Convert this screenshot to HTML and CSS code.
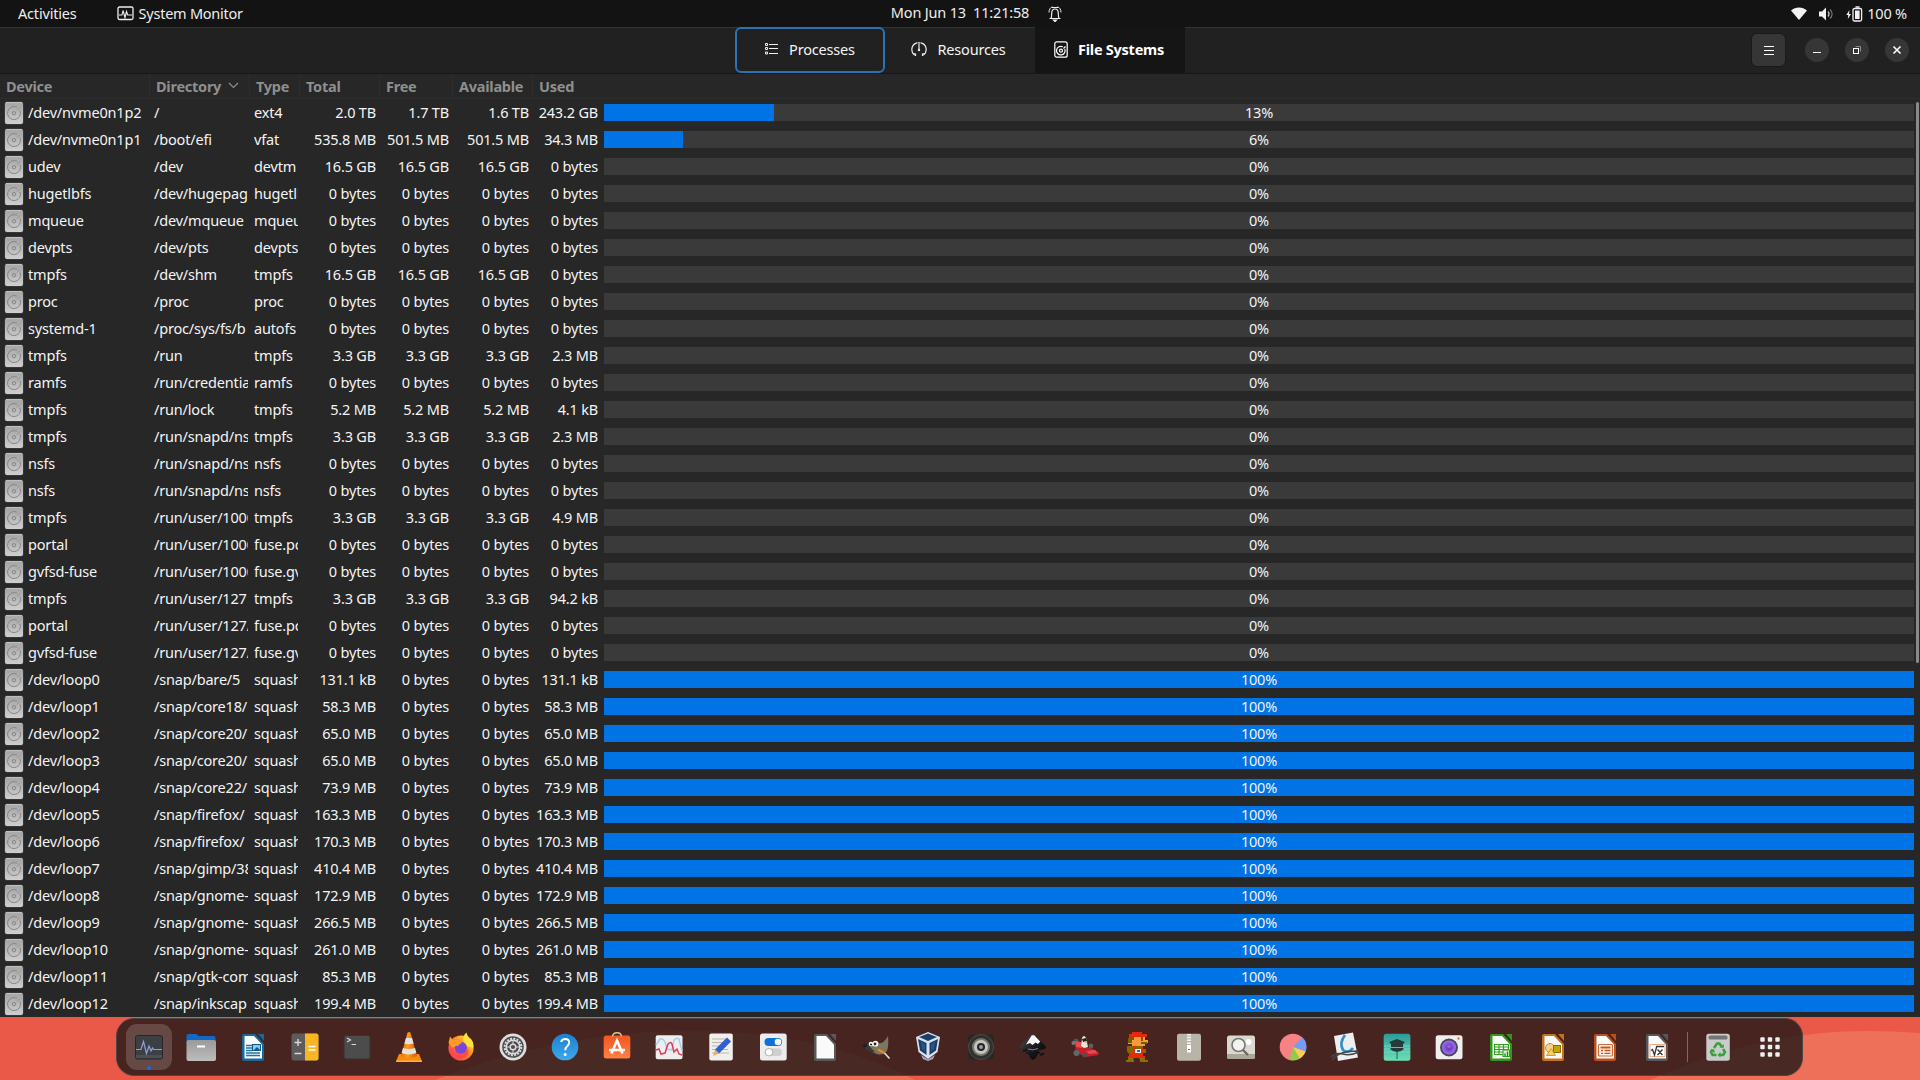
FILE: index.html
```html
<!DOCTYPE html>
<html lang="en">
<head>
<meta charset="utf-8">
<title>System Monitor</title>
<link rel="stylesheet" href="styles.css">
</head>
<body>
<svg class="defs" width="0" height="0">
  <defs>
    <linearGradient id="disk" x1="0" y1="0" x2="0" y2="1"><stop offset="0" stop-color="#a2a2a2"/><stop offset="1" stop-color="#cfcfcf"/></linearGradient>
    <linearGradient id="cone" x1="0" y1="0" x2="1" y2="0"><stop offset="0" stop-color="#e86f00"/><stop offset=".4" stop-color="#ff9a1f"/><stop offset="1" stop-color="#d85f00"/></linearGradient>
    <linearGradient id="fold" x1="0" y1="0" x2="0" y2="1"><stop offset="0" stop-color="#9a9a9a"/><stop offset="1" stop-color="#bdbdbd"/></linearGradient>
    <linearGradient id="help" x1="0" y1="0" x2="0" y2="1"><stop offset="0" stop-color="#1b7fd0"/><stop offset="1" stop-color="#3fa9ea"/></linearGradient>
    <linearGradient id="soft" x1="0" y1="0" x2="0" y2="1"><stop offset="0" stop-color="#f2571f"/><stop offset="1" stop-color="#ff7f45"/></linearGradient>
    <linearGradient id="teal" x1="0" y1="0" x2="0" y2="1"><stop offset="0" stop-color="#2b9a9a"/><stop offset="1" stop-color="#6be0b5"/></linearGradient>
    <linearGradient id="ink" x1="0" y1="0" x2="1" y2="1"><stop offset="0" stop-color="#555"/><stop offset=".5" stop-color="#1a1c20"/><stop offset="1" stop-color="#000"/></linearGradient>
    <linearGradient id="fox" x1="1" y1="0" x2="0" y2="1"><stop offset="0" stop-color="#fff03f"/><stop offset=".45" stop-color="#ff8a1f"/><stop offset="1" stop-color="#f0246a"/></linearGradient>
    <radialGradient id="lens"><stop offset="0" stop-color="#5b2fb0"/><stop offset="1" stop-color="#a070ee"/></radialGradient>
    <symbol id="drive" viewBox="0 0 20 24">
      <rect x=".5" y=".5" width="19" height="23" rx="2.500" fill="#484848"/>
      <rect x="1" y="1" width="18" height="22" rx="2" fill="url(#disk)"/>
      <path d="M2 1.700h16" stroke="#c4c4c4"/>
      <path d="M16 9.500a6.500 6.500 0 1 1-3-3.200" fill="none" stroke="#868686"/>
      <path d="M13 9.500l3-3" stroke="#8e8e8e"/>
      <circle cx="10" cy="12.200" r="1.700" fill="#b8b8b8" stroke="#868686"/>
    </symbol>
    <symbol id="doc" viewBox="0 0 32 32">
      <path d="M7 3h11l9 10v15a2 2 0 0 1-2 2H7a2 2 0 0 1-2-2V5a2 2 0 0 1 2-2z" fill="currentColor"/>
      <path d="M21 3h6v7z" fill="currentColor"/>
      <path d="M7.500 5H17l8 8.500V27.500H7.500z" fill="#fafafa"/>
    </symbol>
  </defs>
</svg>

<header class="panel">
  <div class="panel-side">
    <span class="activities">Activities</span>
    <span class="app-menu">
      <svg width="17" height="15" viewBox="0 0 17 15" fill="none" stroke="#eee" stroke-width="1.300"><rect x="1" y="1" width="15" height="12.500" rx="1.500"/><path d="M2 9h3l1-4.500 2 7 1.500-6 1.200 3.500H15" stroke-width="1.100"/></svg>
      <span class="app-name">System Monitor</span>
    </span>
  </div>
  <div class="clock"><span class="clock-text">Mon Jun 13 &nbsp;11:21:58</span>
    <svg width="14" height="16" viewBox="0 0 14 16" fill="none" stroke="#eee" stroke-width="1.200"><path d="M1.500 12.500h11M2.800 12.500c.9-1 .9-2.500.9-5C3.700 4.700 5 3 7 3s3.300 1.700 3.300 4.500c0 2.500 0 4 .9 5"/><path d="M5.500 14h3L7 15.600z" fill="#eee"/><path d="M1 6.500C1 3.500 2.500 1.300 4.500.8M13 6.500c0-3-1.500-5.200-3.500-5.700M4 1.500h6" stroke-width="1"/></svg>
  </div>
  <div class="panel-side status">
    <svg width="16" height="13" viewBox="0 0 16 13"><path d="M0 3.500C4.500-.6 11.500-.6 16 3.500L8 13z" fill="#f2f2f2"/></svg>
    <svg class="vol" width="15" height="14" viewBox="0 0 15 14"><path d="M0 4.500h3L7 .5v13L3 9.500H0z" fill="#f2f2f2"/><path d="M9 4.500c1.300 1.500 1.300 3.500 0 5" stroke="#bbb" stroke-width="1.300" fill="none"/><path d="M11 2.500c2.700 2.700 2.700 6.300 0 9" stroke="#777" stroke-width="1.300" fill="none"/></svg>
    <svg class="bat" width="17" height="16" viewBox="0 0 17 16"><path d="M3.500 4L.3 9h2l-.5 4L5 8H3z" fill="#f2f2f2"/><rect x="7" y="2.500" width="8.600" height="12.500" rx="1.500" fill="none" stroke="#f2f2f2" stroke-width="1.300"/><rect x="9" y="4.500" width="4.600" height="8.500" fill="#f2f2f2"/><path d="M9.500 1h4" stroke="#f2f2f2" stroke-width="1.500"/></svg>
    <span class="percent">100 %</span>
  </div>
</header>

<main class="window">
  <div class="headerbar">
    <div class="hb-side"></div>
    <nav class="tabs">
      <div class="tab focused">
        <svg width="13" height="12" viewBox="0 0 13 12" fill="none" stroke="#eee"><path d="M4 1.500h9M4 5.500h9M4 10.500h9" /><path d="M.5.500h2v2h-2zM.5 4.500h2v2h-2zM.5 9h2v2h-2z"/></svg>
        <span class="t-proc">Processes</span>
      </div>
      <div class="tab resources">
        <svg width="16" height="15" viewBox="0 0 16 15" fill="none" stroke="#eee" stroke-width="1.200"><path d="M3.600 13.200a7 7 0 0 1 1-11.800M12.400 13.200a7 7 0 0 0-1-11.800M6.500.8h3M4.500 1.400l1.500-.5M11.500 1.400L10 .9"/><path d="M8 2v6"/><circle cx="8" cy="8" r="1.200" fill="#eee" stroke="none"/><path d="M2 11.500l2.500.5v2M14 11.500l-2.500.5v2"/></svg>
        <span class="t-res">Resources</span>
      </div>
      <div class="tab active">
        <svg width="14" height="17" viewBox="0 0 14 17" fill="none" stroke="#fff" stroke-width="1.200"><rect x=".8" y=".8" width="12.400" height="15.400" rx="2"/><path d="M10.800 8a4.300 4.300 0 1 1-2-2.200M9.500 7.500l2-2"/><circle cx="7" cy="9.700" r="1.500"/></svg>
        <span class="t-fs">File Systems</span>
      </div>
    </nav>
    <div class="hb-side controls">
      <div class="menu"><svg width="10" height="9" viewBox="0 0 10 9"><path d="M0 .5h10M0 4.500h10M0 8.500h10" stroke="#fff"/></svg></div>
      <div class="round"><svg width="12" height="12" viewBox="0 0 12 12"><path d="M2 8.500h8" stroke="#fff"/></svg></div>
      <div class="round"><svg width="12" height="12" viewBox="0 0 12 12" fill="none"><path d="M4.500 2.500h5v5" stroke="#8a8a8a"/><rect x="2.500" y="4.500" width="5" height="5" stroke="#fff"/></svg></div>
      <div class="round"><svg width="12" height="12" viewBox="0 0 12 12"><path d="M2.500 2.500l7 7M9.500 2.500l-7 7" stroke="#fff" stroke-width="1.600"/></svg></div>
    </div>
  </div>

  <div class="table">
    <div class="row head">
      <div>Device</div>
      <div>Directory <svg class="sort" width="11" height="7" viewBox="0 0 11 7"><path d="M1 1l4.500 4.500L10 1" fill="none" stroke="#8f8f8f" stroke-width="1.200"/></svg></div>
      <div>Type</div><div>Total</div><div>Free</div><div>Available</div><div>Used</div><div></div>
    </div>
    <div id="rows"></div>
    <div class="scrollbar"></div>
  </div>
</main>

<footer class="desktop">
  <svg class="wallpaper" width="1920" height="63" viewBox="0 0 1920 63"><path d="M435 63Q560 14 690 14T915 63zM1650 63Q1760 14 1865 14Q1895 14 1920 16V63z" fill="#ee7058"/></svg>
  <div class="dock">
    <div class="app running"><svg viewBox="0 0 32 32"><rect x="2.500" y="4.500" width="27" height="23.500" rx="2" fill="#3c4043" stroke="#262626"/><path d="M3 24h26v3H3z" fill="#4b4f52"/><path d="M3 18.500h5l2.500-8 3 12 2.500-7.500 2 5 1.500-3 1 1.500h8.500" fill="none" stroke="#8f9edb" stroke-width="1.200"/></svg></div>
    <div class="app"><svg viewBox="0 0 32 32"><path d="M1.500 5a2 2 0 0 1 2-2h8l2 2h15a2 2 0 0 1 2 2v5h-29z" fill="#1268c8"/><rect x="1.500" y="9" width="29.500" height="21" rx="2" fill="url(#fold)"/><path d="M12 15.500h8" stroke="#fff" stroke-width="2"/></svg></div>
    <div class="app c-writer"><svg viewBox="0 0 32 32"><use href="#doc"/><path d="M9 14.500h6M9 17h6M9 19.500h6M9 22h14M9 24.500h14" stroke="#1d75a5" stroke-width="1.300"/><rect x="15.500" y="13.500" width="8" height="6" fill="#8cc9ee" stroke="#115a86"/><path d="M17 19l3-3 3 3z" fill="#115a86"/></svg></div>
    <div class="app"><svg viewBox="0 0 32 32"><rect x="2.500" y="2.500" width="27" height="27" rx="2.500" fill="#5c5c5c"/><path d="M16 2.500h11a2.500 2.500 0 0 1 2.500 2.500v22a2.500 2.500 0 0 1-2.500 2.500H16z" fill="#fbb522"/><path d="M5.500 11.500h7M9 8v7M5.500 22.500h7" stroke="#d8d8d8" stroke-width="1.400"/><path d="M19.500 15.500h7M19.500 19h7" stroke="#fff" stroke-width="1.400"/></svg></div>
    <div class="app"><svg viewBox="0 0 32 32"><rect x="3" y="4.500" width="26" height="23.500" rx="2" fill="#4c4c4c" stroke="#333"/><path d="M6 7l3.500 2L6 11M10.500 13.500H15" fill="none" stroke="#d6d6d6" stroke-width="1.200"/></svg></div>
    <div class="app"><svg viewBox="0 0 32 32"><path d="M6 23h20l3 7.500H3z" fill="#f78a10"/><path d="M3 29.500h26v1.500H3z" fill="#ffb040"/><path d="M14.600 1.500q1.400-1 2.800 0L24 25q-8 4-16 0z" fill="url(#cone)"/><path d="M13 7h6l1.600 5.500q-4.600 1.500-9.200 0zM10 17q6 2 12 0l1.400 5q-7.400 2.800-14.800 0z" fill="#e3e3e3"/></svg></div>
    <div class="app"><svg viewBox="0 0 32 32"><circle cx="16" cy="17" r="12.600" fill="url(#fox)"/><path d="M18 9q0-5 3.500-7.500Q22 5 26 8q3.500 4 2 9l-6-2z" fill="#ffe13a"/><circle cx="16" cy="17" r="6" fill="#7a45d8"/><path d="M3.500 12L5 5.500 8 9q4-1 6 1l3 2q-3 1-4 3-3-1-5 2z" fill="#ff9a26"/><path d="M7 17q2 6 9 5.500 6 0 7-6 2 9-6 11T5 21z" fill="#ff4a45"/></svg></div>
    <div class="app"><svg viewBox="0 0 32 32"><circle cx="16" cy="16" r="13.500" fill="#dedede"/><circle cx="16" cy="16" r="10.800" fill="#4d4d4d"/><circle cx="16" cy="16" r="8.300" fill="none" stroke="#ddd" stroke-width="2" stroke-dasharray="2 1.260"/><circle cx="16" cy="16" r="6.800" fill="none" stroke="#ddd" stroke-width="1.500"/><circle cx="16" cy="16" r="2.800" fill="none" stroke="#ddd" stroke-width="1.400"/><path d="M16 9v4M16 19v4M9 16h4M19 16h4" stroke="#ddd"/></svg></div>
    <div class="app"><svg viewBox="0 0 32 32"><circle cx="16" cy="16" r="13.300" fill="url(#help)"/><path d="M12 11q1-3 4.200-3 4 0 4 3.500 0 2-2 3.700-1.900 1.500-1.900 4" fill="none" stroke="#fff" stroke-width="2"/><circle cx="16.200" cy="23.500" r="1.500" fill="#fff"/></svg></div>
    <div class="app"><svg viewBox="0 0 32 32"><rect x="2.700" y="4.500" width="26.600" height="23" rx="2.500" fill="url(#soft)"/><path d="M11.500 5.500q.5-3.700 4.500-3.700t4.500 3.700" fill="none" stroke="#e5c48f" stroke-width="1.400"/><path d="M10.500 22.500l5.500-13 5.500 13M8 19h16" fill="none" stroke="#fff" stroke-width="2.500"/></svg></div>
    <div class="app"><svg viewBox="0 0 32 32"><rect x="2.700" y="4.300" width="26.800" height="24" rx="2" fill="#eee"/><path d="M3 14l4-6q3-1 5 3l2 7 5 1 2-10q3-3 5-1l3 12" fill="none" stroke="#a9cdea" stroke-width="1.500"/><path d="M3 19l3-1 2 5 4-1 3-9q3-3 4 0l2 8 3-3 2 5 3 1" fill="none" stroke="#e0395b" stroke-width="1.500"/></svg></div>
    <div class="app"><svg viewBox="0 0 32 32"><rect x="4.300" y="2.500" width="23.500" height="27" rx="2" fill="#efefeb"/><path d="M7 8h14M7 11.500h14M7 15h14M7 18.500h16M7 22h17" stroke="#b9b7ad"/><path d="M22 6.500l4 4L14 22.500l-4-4z" fill="#2f5fd0"/><path d="M10 18.500l4 4-6 2.500z" fill="#e9ad64"/></svg></div>
    <div class="app"><svg viewBox="0 0 32 32"><rect x="3" y="2.500" width="26.700" height="27" rx="2.500" fill="#ececec"/><rect x="7.500" y="7" width="17.500" height="8" rx="4" fill="#0d72d8"/><circle cx="21" cy="11" r="3.300" fill="#fff"/><rect x="7.500" y="17.500" width="17.500" height="7.500" rx="3.700" fill="#cfcfcf"/><circle cx="12" cy="21.200" r="3.700" fill="#fff" stroke="#999" stroke-width=".7"/></svg></div>
    <div class="app c-start"><svg viewBox="0 0 32 32"><use href="#doc"/></svg></div>
    <div class="app"><svg viewBox="0 0 32 32"><path d="M8 15q4-5 8-3 6 2 11-7 1 9-1 15-5 5-10 3-5-1-9-5z" fill="#7d765c"/><path d="M3 14l4-1 3 4 4 4-4 .5-5-3z" fill="#3a3a34"/><ellipse cx="4" cy="14.500" rx="2.200" ry="1.800" fill="#222"/><circle cx="10" cy="13" r="2.300" fill="#fff"/><circle cx="14.500" cy="12.700" r="2.900" fill="#fff"/><circle cx="10" cy="13.500" r="1.100" fill="#222"/><circle cx="14" cy="13" r="1.400" fill="#222"/><path d="M17 18.500l6.500 3.500" stroke="#e38b2f" stroke-width="2.200"/><path d="M23.500 22l5 5.500" stroke="#ddd" stroke-width="1.700"/></svg></div>
    <div class="app"><svg viewBox="0 0 32 32"><path d="M8 24l7 4.500 7-4.500-2 4-5 2-5-2z" fill="#a9acd2"/><path d="M15 1l12 5-2.500 15L15 28 5.500 21 3 6z" fill="#d8e3f0"/><path d="M15 2.500l9 3.500-9 4-9-4zM5 8l8.500 4v12L7 19.500zM25 8l-8.500 4v12L23 19.500z" fill="#1d3e68"/><path d="M8 11l4 2v7l-3-2zM22 11l-4 2v7l3-2z" fill="#2b5586"/></svg></div>
    <div class="app"><svg viewBox="0 0 32 32"><rect x="3" y="3.500" width="26" height="25" rx="4" fill="#272725"/><circle cx="16" cy="16" r="12.500" fill="#30302e" stroke="#4b4b48"/><circle cx="16" cy="16" r="9" fill="#777772"/><circle cx="16" cy="16" r="7" fill="#c6c6be"/><circle cx="16" cy="16" r="4" fill="#252525"/><circle cx="16" cy="16" r="2" fill="#8fa2ad"/></svg></div>
    <div class="app"><svg viewBox="0 0 32 32"><path d="M14.500 3.500q1.500-1.500 3 0L28.500 15q1.500 3-3 3.500l-5 1 3 2-3 2-2 4-2.500 1.500-3-2-1-3-4-2 4-2-6-1.500q-4.500-1-2.500-4z" fill="url(#ink)"/><path d="M14.800 4.200h2.400l6 6.300-2.200 2.500-2.500-1.500-3 2.500-2.500-2-4 1.500z" fill="#f4f6f8"/><path d="M6 20l4-1M23 24l4-1.500" fill="none" stroke="#101418" stroke-width="2"/><path d="M11 18q5 2 10-.5" fill="none" stroke="#6d88a5"/></svg></div>
    <div class="app"><svg viewBox="0 0 32 32"><circle cx="7" cy="10" r="2.600" fill="#51565a"/><circle cx="4.500" cy="12" r="2" fill="#77797a"/><path d="M6 14l8 1 10 3 6 4-1 2-12 2-10-5z" fill="#c91d29"/><path d="M6 10l6 1 1 6-6-1zM17 20l9-1 3 3-9 1z" fill="#e84a50"/><path d="M13 7q2-4 4 0l2 9-4 1-3-2z" fill="#e7e7e0"/><path d="M13 8l4-1 1 3-4 1z" fill="#202020"/><path d="M15 10l4 1-3 1z" fill="#f1a622"/><circle cx="7.500" cy="22" r="3" fill="#62676b"/><circle cx="15.500" cy="24" r="2.400" fill="#4d5154"/><circle cx="22" cy="15" r="2.400" fill="#5a5f63"/></svg></div>
    <div class="app"><svg viewBox="0 0 32 32" shape-rendering="crispEdges"><path d="M11 1h10v2h5v3H8V3h3z" fill="#e42a0a"/><path d="M9 6h15v3h3v3h-3v3H11v-2H7V7h2z" fill="#f79a3c"/><path d="M8 6h5v3h-2v3H7V7h1zM20 6h2v4h-2zM20 11h6v2h-6z" fill="#7b5b00"/><path d="M8 15h14v3h3v4H7z" fill="#8b6400"/><path d="M12 15h3v5h5v-4h2v11H8v-5h4z" fill="#e42a0a"/><path d="M6 15h4v6H6z" fill="#8b6400"/><path d="M14 18h6v4h-6z" fill="#eee"/><path d="M16 19h3v2h-3z" fill="#3556cc"/><path d="M7 25h6v3H7zM18 25h6v3h-6z" fill="#e42a0a"/><path d="M7 27h5v2h1v2H5v-2h2zM19 27h5v2h3v2h-8z" fill="#8b6f00"/></svg></div>
    <div class="app"><svg viewBox="0 0 32 32"><rect x="4" y="2.700" width="24" height="27" rx="2" fill="#b9b4a8"/><path d="M16 3v14" stroke="#f5f5f2" stroke-width="4" stroke-dasharray="1.500 1.300"/><rect x="14" y="14" width="4" height="7.500" rx=".8" fill="#fff"/><path d="M15 18.500h2" stroke="#777"/></svg></div>
    <div class="app"><svg viewBox="0 0 32 32"><rect x="2" y="4.500" width="28" height="23.500" rx="2.500" fill="#dad8cf"/><path d="M2 23h28v3a2 2 0 0 1-2 2H4a2 2 0 0 1-2-2z" fill="#aaa799"/><circle cx="23.500" cy="11" r="3" fill="#fff"/><circle cx="13.500" cy="14" r="6.500" fill="#f2f2ee" stroke="#777" stroke-width="1.600"/><path d="M18 19l5 5" stroke="#666" stroke-width="2.200"/></svg></div>
    <div class="app"><svg viewBox="0 0 32 32"><circle cx="16" cy="16" r="13.300" fill="#f58284"/><path d="M16 16L25.500 6.600A13.300 13.300 0 0 1 28.500 20.500z" fill="#749cf5"/><path d="M16 16l12.500 4.500A13.300 13.300 0 0 1 22.500 27.600z" fill="#f7cf55"/><path d="M16 16l6.500 11.600A13.300 13.300 0 0 1 12.500 28.900z" fill="#90cb4e"/></svg></div>
    <div class="app"><svg viewBox="0 0 32 32"><path d="M5 5l19-3.500 5 25L9 30z" fill="#eceef0"/><path d="M16 4q-6 8-2 15 5 4 10-2" fill="none" stroke="#3590ca" stroke-width="2.700"/><path d="M2 26q5-5 12-3t16-2M3 29q6-7 14-8t12-1" fill="none" stroke="#454545" stroke-width="1.500"/></svg></div>
    <div class="app"><svg viewBox="0 0 32 32"><rect x="2.700" y="2.700" width="26.700" height="27" rx="2.500" fill="url(#teal)"/><path d="M3 15h26M3 18h26M3 21h26" stroke="#8de8c9" stroke-opacity=".6"/><path d="M16 8l8 3-2 2v4l1 1-3 2-4 1-4-1-3-2 1-1v-4l-2-2z" fill="#263a3b"/><path d="M9 16.500h14" stroke="#6fb9a6"/><path d="M16 20v8" stroke="#215c53"/></svg></div>
    <div class="app"><svg viewBox="0 0 32 32"><rect x="2.700" y="4.300" width="26.800" height="24" rx="2.500" fill="#efefef"/><circle cx="16" cy="16.500" r="9" fill="#4a4660"/><circle cx="16" cy="16.500" r="7" fill="url(#lens)"/><circle cx="16" cy="15.500" r="1.800" fill="#8964da"/><rect x="24.500" y="6.500" width="2" height="2" fill="#ee5a4f"/></svg></div>
    <div class="app c-calc"><svg viewBox="0 0 32 32"><use href="#doc"/><path d="M9.500 13.500h14v10h-14zM9.500 16h14M9.500 18.500h14M9.500 21h14M14 13.500v10M18.500 13.500v10" fill="#fff" stroke="#32a01f" stroke-width="1.200"/><rect x="18" y="19" width="6.500" height="6.500" fill="#d6f0cd" stroke="#32a01f"/><path d="M20 25v-2.500M22.500 25v-4.500" stroke="#23831a" stroke-width="1.300"/></svg></div>
    <div class="app c-draw"><svg viewBox="0 0 32 32"><use href="#doc"/><circle cx="13" cy="17" r="4.500" fill="#f4d48a" stroke="#c98a2e"/><rect x="16.500" y="14.500" width="7" height="7" fill="#c8a400" stroke="#8f6a00"/><path d="M9.500 24.500l4.500-7 4.500 7z" fill="#f6cf5b" stroke="#d69c3c"/></svg></div>
    <div class="app c-impress"><svg viewBox="0 0 32 32"><use href="#doc"/><rect x="9.500" y="13.500" width="14" height="11.500" rx="1" fill="#fdf1ea" stroke="#c76a3a" stroke-width="1.200"/><path d="M11.500 16.500h10" stroke="#c8561c" stroke-width="2"/><path d="M12 19.500h2M12 22.300h2M15.500 19.500h6M15.500 22.300h6" stroke="#c8561c" stroke-width="1.300"/></svg></div>
    <div class="app c-math"><svg viewBox="0 0 32 32"><use href="#doc"/><rect x="9" y="13.500" width="15" height="12" fill="#fff" stroke="#f2ab87"/><path d="M10 19.500l1.500-1 2 5.500 2.200-8.500H23M16.500 18.500l5 5.500M21.500 18.500l-5 5.500" fill="none" stroke="#333" stroke-width="1.300"/></svg></div>
    <span class="divider"></span>
    <div class="app"><svg viewBox="0 0 32 32"><rect x="4.300" y="2.700" width="23.500" height="27" rx="2.500" fill="#cbcbcb"/><rect x="6.500" y="4.500" width="19" height="4" rx="1.500" fill="#757575"/><path d="M12 17l3-4.500h2.500l2 3M21 18l2 3-1.800 3H17M14.500 24h-4L9 21l1.500-2.500" fill="none" stroke="#36a33a" stroke-width="2.500"/><path d="M17.500 16.500l4 .5.500-4zM18.500 21v5.500L15.500 24zM8 19.500l4-1.500 1 4z" fill="#36a33a"/></svg></div>
    <div class="app"><svg viewBox="0 0 32 32" fill="#f0eeee"><rect x="6.300" y="6.300" width="4.400" height="4.400" rx="1"/><rect x="13.800" y="6.300" width="4.400" height="4.400" rx="1"/><rect x="21.300" y="6.300" width="4.400" height="4.400" rx="1"/><rect x="6.300" y="13.800" width="4.400" height="4.400" rx="1"/><rect x="13.800" y="13.800" width="4.400" height="4.400" rx="1"/><rect x="21.300" y="13.800" width="4.400" height="4.400" rx="1"/><rect x="6.300" y="21.300" width="4.400" height="4.400" rx="1"/><rect x="13.800" y="21.300" width="4.400" height="4.400" rx="1"/><rect x="21.300" y="21.300" width="4.400" height="4.400" rx="1"/></svg></div>
  </div>
</footer>
<script src="filesystems.js"></script>
</body>
</html>
```
FILE: styles.css
```css
* { box-sizing: border-box; }

body {
  margin: 0;
  width: 1920px;
  height: 1080px;
  overflow: hidden;
  display: flex;
  flex-direction: column;
  background: #272727;
  color: #f4f4f4;
  font: 14.5px/20px "Noto Sans", sans-serif;
  letter-spacing: -0.18px;
}

svg { display: block; flex: none; }
.defs { position: absolute; }

/* top panel */
.panel {
  height: 27px;
  flex: none;
  display: grid;
  grid-template-columns: 1fr auto 1fr;
  align-items: center;
  background: #131313;
  color: #eee;
}
.panel span { padding-bottom: 1px; }
.clock .clock-text { padding-bottom: 3px; }
.panel-side { display: flex; align-items: center; padding-left: 18px; }
.app-menu { display: flex; align-items: center; gap: 5px; margin-left: 40px; }
.app-name { letter-spacing: -0.25px; }
.clock { display: flex; align-items: center; gap: 19px; padding-left: 33px; }
.status { justify-content: flex-end; padding: 0 13px 0 0; }
.vol { margin-left: 12px; }
.bat { margin-left: 12px; }
.percent { margin-left: 4px; }

/* header bar */
.headerbar {
  height: 47px;
  display: grid;
  grid-template-columns: 1fr auto 1fr;
  background: #212121;
  border-top: 1px solid #333;
  border-bottom: 1px solid #171717;
}
.tabs { display: flex; margin-top: -1px; }
.tab {
  width: 150px;
  height: 46px;
  display: flex;
  align-items: center;
  justify-content: center;
  gap: 11px;
}
.tab span { padding-bottom: 2px; }
.tab svg { margin-bottom: 2px; }
.tab.resources { gap: 10px; padding-right: 3px; }
.tab.focused { border: 2px solid #2a72b8; border-radius: 6px; }
.tab.active { background: #151515; font-weight: bold; color: #fff; letter-spacing: -0.25px; gap: 10px; padding-right: 2px; }
.controls { display: flex; align-items: center; justify-content: flex-end; padding: 0 11px 1px 0; gap: 16px; }
.menu, .round { display: flex; align-items: center; justify-content: center; background: #363636; }
.menu { width: 35px; height: 34px; border-radius: 6px; border: 1px solid #191919; margin-right: 3px; }
.round { width: 24px; height: 24px; border-radius: 50%; }

/* file system list */
.table { position: relative; }
.row {
  display: grid;
  grid-template-columns: 149px 100px 50px 80px 73px 80px 71px 1fr;
  height: 27px;
  align-items: center;
}
.head { height: 25px; color: #8f8f8f; font-weight: bold; border-bottom: 1px solid #2d2d2d; letter-spacing: -0.25px; }
.head > div { height: 24px; padding: 0 0 1px 6px; border-left: 1px solid #2d2d2d; display: flex; align-items: center; }
.head > div:first-child { border-left: 0; }
.head > div:last-child { border-left: 0; }
.sort { margin-left: 7px; }
.cell { white-space: pre; overflow: hidden; padding-bottom: 2px; }
.device { display: flex; align-items: center; gap: 4px; padding: 0 0 0 4px; }
.device span { padding-bottom: 2px; }
.dir { margin: 0 1px 0 5px; }
.type { margin: 0 1px 0 5px; }
.num { text-align: right; padding-right: 3px; }
.used { padding-right: 5px; }
.bar {
  margin: 0 6px 0 1px;
  height: 17px;
  position: relative;
  background: #3a3a3a;
  display: flex;
  align-items: center;
  justify-content: center;
}
.fill { position: absolute; left: 0; top: 0; bottom: 0; background: #0073e5; }
.value { position: relative; padding-bottom: 2px; }
.scrollbar { position: absolute; right: 1px; top: 28px; width: 3px; height: 561px; border-radius: 2px; background: #8a8a8a; }

/* desktop strip and dock */
.desktop { position: relative; height: 63px; flex: none; background: #ea5848; padding: 1px 117px 0 116px; }
.wallpaper { position: absolute; left: 0; top: 0; }
.dock {
  position: relative;
  height: 58px;
  display: flex;
  align-items: center;
  padding-left: 9px;
  gap: 6px;
  background: rgba(31, 24, 23, 0.8);
  border: 1px solid #4d4544;
  border-radius: 18px;
}
.app { width: 46px; height: 46px; display: flex; align-items: center; justify-content: center; flex: none; border-radius: 11px; }
.app svg { width: 32px; height: 32px; }
.running { background: rgba(255, 255, 255, 0.17); position: relative; }
.running::after { content: ""; position: absolute; left: 21px; bottom: 0; width: 4px; height: 4px; border-radius: 50%; background: #0d72e0; }
.divider { width: 1px; height: 30px; background: #7d6a68; margin: 0 1px; }
.c-writer { color: #17699a; }
.c-start { color: #595959; }
.c-calc { color: #2f981c; }
.c-draw { color: #c4711d; }
.c-impress { color: #b9501e; }
.c-math { color: #55585a; }
```
FILE: filesystems.js
```js
const Z = "0 bytes";
const fileSystems = [
  ["/dev/nvme0n1p2", "/", "ext4", "2.0 TB", "1.7 TB", "1.6 TB", "243.2 GB", 13],
  ["/dev/nvme0n1p1", "/boot/efi", "vfat", "535.8 MB", "501.5 MB", "501.5 MB", "34.3 MB", 6],
  ["udev", "/dev", "devtm", "16.5 GB", "16.5 GB", "16.5 GB", Z, 0],
  ["hugetlbfs", "/dev/hugepag", "hugetlb", Z, Z, Z, Z, 0],
  ["mqueue", "/dev/mqueue", "mqueu", Z, Z, Z, Z, 0],
  ["devpts", "/dev/pts", "devpts", Z, Z, Z, Z, 0],
  ["tmpfs", "/dev/shm", "tmpfs", "16.5 GB", "16.5 GB", "16.5 GB", Z, 0],
  ["proc", "/proc", "proc", Z, Z, Z, Z, 0],
  ["systemd-1", "/proc/sys/fs/b", "autofs", Z, Z, Z, Z, 0],
  ["tmpfs", "/run", "tmpfs", "3.3 GB", "3.3 GB", "3.3 GB", "2.3 MB", 0],
  ["ramfs", "/run/credentia", "ramfs", Z, Z, Z, Z, 0],
  ["tmpfs", "/run/lock", "tmpfs", "5.2 MB", "5.2 MB", "5.2 MB", "4.1 kB", 0],
  ["tmpfs", "/run/snapd/ns", "tmpfs", "3.3 GB", "3.3 GB", "3.3 GB", "2.3 MB", 0],
  ["nsfs", "/run/snapd/ns", "nsfs", Z, Z, Z, Z, 0],
  ["nsfs", "/run/snapd/ns", "nsfs", Z, Z, Z, Z, 0],
  ["tmpfs", "/run/user/1000", "tmpfs", "3.3 GB", "3.3 GB", "3.3 GB", "4.9 MB", 0],
  ["portal", "/run/user/1000", "fuse.po", Z, Z, Z, Z, 0],
  ["gvfsd-fuse", "/run/user/1000", "fuse.gv", Z, Z, Z, Z, 0],
  ["tmpfs", "/run/user/127", "tmpfs", "3.3 GB", "3.3 GB", "3.3 GB", "94.2 kB", 0],
  ["portal", "/run/user/127/", "fuse.po", Z, Z, Z, Z, 0],
  ["gvfsd-fuse", "/run/user/127/", "fuse.gv", Z, Z, Z, Z, 0],
  ["/dev/loop0", "/snap/bare/5", "squash", "131.1 kB", Z, Z, "131.1 kB", 100],
  ["/dev/loop1", "/snap/core18/", "squash", "58.3 MB", Z, Z, "58.3 MB", 100],
  ["/dev/loop2", "/snap/core20/", "squash", "65.0 MB", Z, Z, "65.0 MB", 100],
  ["/dev/loop3", "/snap/core20/", "squash", "65.0 MB", Z, Z, "65.0 MB", 100],
  ["/dev/loop4", "/snap/core22/", "squash", "73.9 MB", Z, Z, "73.9 MB", 100],
  ["/dev/loop5", "/snap/firefox/", "squash", "163.3 MB", Z, Z, "163.3 MB", 100],
  ["/dev/loop6", "/snap/firefox/", "squash", "170.3 MB", Z, Z, "170.3 MB", 100],
  ["/dev/loop7", "/snap/gimp/38", "squash", "410.4 MB", Z, Z, "410.4 MB", 100],
  ["/dev/loop8", "/snap/gnome-", "squash", "172.9 MB", Z, Z, "172.9 MB", 100],
  ["/dev/loop9", "/snap/gnome-", "squash", "266.5 MB", Z, Z, "266.5 MB", 100],
  ["/dev/loop10", "/snap/gnome-", "squash", "261.0 MB", Z, Z, "261.0 MB", 100],
  ["/dev/loop11", "/snap/gtk-com", "squash", "85.3 MB", Z, Z, "85.3 MB", 100],
  ["/dev/loop12", "/snap/inkscap", "squash", "199.4 MB", Z, Z, "199.4 MB", 100],
];

document.getElementById("rows").innerHTML = fileSystems.map(
  ([device, dir, type, total, free, available, used, percent]) => `
  <div class="row">
    <div class="cell device"><svg width="20" height="24"><use href="#drive"/></svg><span>${device}</span></div>
    <div class="cell dir">${dir}</div>
    <div class="cell type">${type}</div>
    <div class="cell num">${total}</div>
    <div class="cell num">${free}</div>
    <div class="cell num">${available}</div>
    <div class="cell num used">${used}</div>
    <div class="bar"><div class="fill" style="width:${percent}%"></div><span class="value">${percent}%</span></div>
  </div>`
).join("");
```
